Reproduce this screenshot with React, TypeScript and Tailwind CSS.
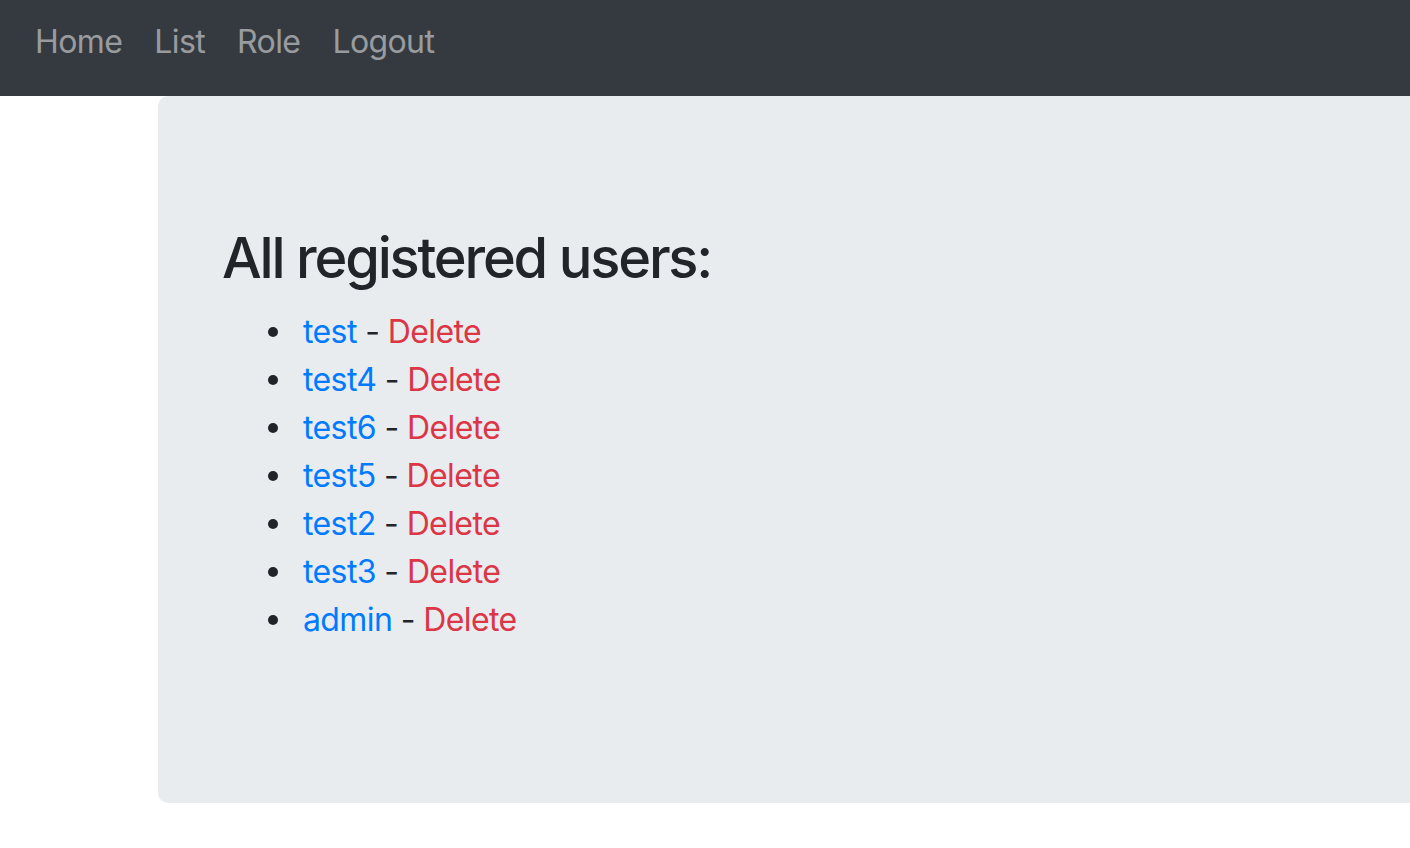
const users = ["test", "test4", "test6", "test5", "test2", "test3", "admin"]

const App = () => {
  return (
    <div className="min-h-[848px] w-full overflow-hidden bg-white font-['Inter','Noto_Sans',sans-serif] text-[32px] leading-[48px] tracking-[-0.6px] text-[#212529]">
      <nav className="flex h-[96px] items-start gap-[32px] bg-[#343a40] pl-[35px] pt-[18px]">
        {["Home", "List", "Role", "Logout"].map((item) => (
          <a key={item} href="#" className="text-white/50 hover:text-white/75">
            {item}
          </a>
        ))}
      </nav>

      <div className="ml-[158px] w-[1400px] rounded-[10px] bg-[#e9ecef] px-[64px] pt-[129px] pb-[127px]">
        <h3 className="mb-[16px] text-[56px] leading-[67px] font-medium tracking-[-2.2px]">
          All registered users:
        </h3>
        <ul className="mb-[32px] pl-[46px]">
          {users.map((user) => (
            <li key={user} className="flex items-center whitespace-pre">
              <span className="mr-[25px] h-[10px] w-[10px] rounded-full bg-[#212529]" />
              <a href="#" className="text-[#007bff] hover:underline">
                {user}
              </a>
              {" - "}
              <a href="#" className="text-[#dc3545] hover:underline">
                Delete
              </a>
            </li>
          ))}
        </ul>
      </div>
    </div>
  )
}

export default App
